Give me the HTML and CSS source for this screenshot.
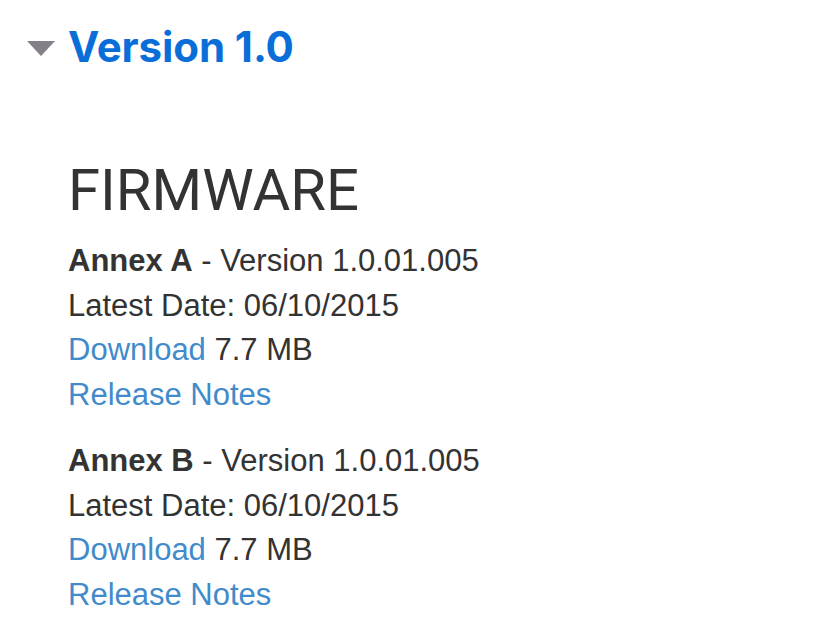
FILE: index.html
```html
<!DOCTYPE html>
<html lang="en">
<head>
    <meta charset="UTF-8">
    <meta name="viewport" content="width=device-width, initial-scale=1.0">
    <title>Version 1.0</title>
    <link rel="stylesheet" href="styles.css">
</head>
<body>
    <div class="release">
        <div class="release-head">
            <span class="caret"></span>
            <h2 class="release-title">Version 1.0</h2>
        </div>
        <div class="release-body">
            <h3 class="section-title">FIRMWARE</h3>
            <div class="file">
                <div class="line"><b>Annex A</b> - Version 1.0.01.005</div>
                <div class="line">Latest Date: 06/10/2015</div>
                <div class="line"><a href="#">Download</a> 7.7 MB</div>
                <div class="line"><a href="#">Release Notes</a></div>
            </div>
            <div class="file">
                <div class="line"><b>Annex B</b> - Version 1.0.01.005</div>
                <div class="line">Latest Date: 06/10/2015</div>
                <div class="line"><a href="#">Download</a> 7.7 MB</div>
                <div class="line"><a href="#">Release Notes</a></div>
            </div>
        </div>
    </div>
</body>
</html>
```

FILE: styles.css
```css
body {
    margin: 0;
    background: #fff;
    font-family: "Liberation Sans", Arial, sans-serif;
    color: #333;
}
.release {
    padding: 21px 0 0 27px;
}
.release-head {
    display: flex;
    align-items: center;
    gap: 13px;
}
.caret {
    width: 0;
    height: 0;
    border-left: 14px solid transparent;
    border-right: 14px solid transparent;
    border-top: 15px solid #858088;
    margin-top: 2px;
}
.release-title {
    margin: 0;
    font-family: Inter, sans-serif;
    font-weight: 700;
    font-size: 42px;
    line-height: 52px;
    color: #0a6ed8;
    letter-spacing: -0.1px;
}
.release-body {
    padding: 86px 0 0 41px;
}
.section-title {
    margin: 0 0 18px;
    font-family: Roboto, sans-serif;
    font-weight: 400;
    font-size: 58px;
    line-height: 62px;
    color: #333;
}
.file {
    margin-bottom: 22px;
}
.line {
    font-size: 31px;
    line-height: 44.5px;
}
.line b {
    font-weight: 700;
}
.line a {
    color: #428bca;
    text-decoration: none;
}
```
